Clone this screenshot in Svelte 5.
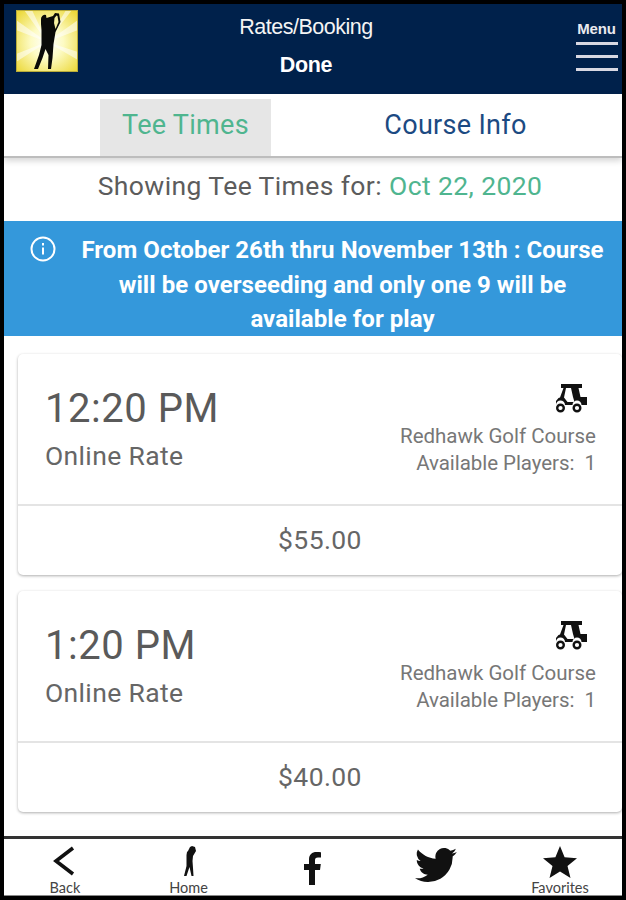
<script>
    const slots = [
        { time: "12:20 PM", rate: "Online Rate", course: "Redhawk Golf Course", players: 1, price: "$55.00" },
        { time: "1:20 PM", rate: "Online Rate", course: "Redhawk Golf Course", players: 1, price: "$40.00" },
    ];
</script>

<div class="frame">
    <header class="topbar">
        <div class="logo">
            <svg viewBox="0 0 62 62" width="62" height="62">
                <defs>
                    <radialGradient id="glow" cx="50%" cy="52%" r="66%">
                        <stop offset="0" stop-color="#ffffff" />
                        <stop offset="0.4" stop-color="#fdfbc4" />
                        <stop offset="1" stop-color="#ecd93c" />
                    </radialGradient>
                </defs>
                <rect width="62" height="62" fill="url(#glow)" />
                <g fill="#fff" opacity="0.55">
                    <path d="M31 32L0 10V20Z" />
                    <path d="M31 32L62 10V20Z" />
                    <path d="M31 32L0 44V52Z" />
                    <path d="M31 32L62 42V50Z" />
                    <path d="M31 32L8 0H16Z" />
                    <path d="M31 32L50 0H56Z" />
                </g>
                <path fill="#0a0a08" d="M25 9a4 4 0 0 1 5-4l.5 3L37 6l2-3 4 .5 1.500 8.500-5 10-2 12-1 14-1.500 11h-3l.5-14-3-6-3 9-4.500 11h-4l5-14 2.500-10V20l-.5-6z" />
                <path fill="#f6f0a0" d="M38.500 8l2-2.500 1 .5 1 6-3 7-1.500-6z" />
                <rect x="0.500" y="0.500" width="61" height="61" fill="none" stroke="#b9ac3a" />
            </svg>
        </div>
        <div class="heading">
            <div class="title">Rates/Booking</div>
            <div class="done">Done</div>
        </div>
        <div class="menu">
            <span class="menu-label">Menu</span>
            <i></i><i></i><i></i>
        </div>
    </header>

    <nav class="tabs">
        <div class="tab active">Tee Times</div>
        <div class="tab">Course Info</div>
    </nav>

    <div class="showing">Showing Tee Times for: <span class="date">Oct 22, 2020</span></div>

    <div class="notice">
        <svg class="info" viewBox="0 0 26 26" width="26" height="26" fill="none" stroke="#fff" stroke-width="2">
            <circle cx="13" cy="13" r="11.500" />
            <path d="M13 11.500v7" />
            <path d="M13 7v2.500" />
        </svg>
        <p>From October 26th thru November 13th : Course will be overseeding and only one 9 will be available for play</p>
    </div>

    <main class="list">
        {#each slots as slot}
            <section class="card">
                <div class="card-top">
                    <div class="left">
                        <div class="time">{slot.time}</div>
                        <div class="rate">{slot.rate}</div>
                    </div>
                    <div class="right">
                        <svg class="cart" viewBox="0 0 32 29" width="32" height="29">
                            <path fill="#111" d="M5 0h21v4h-3.500l2 9H31v8h-5.500a4.500 4.500 0 0 0-9 0H9a4.500 4.500 0 0 0-9 0v-4l2.500-3 1.500-.5L7.500 4H5zm5 4L8 13.500l3.500 4.500h7l-1.500-5-2-9z" />
                            <circle cx="4.500" cy="24" r="3.300" fill="none" stroke="#111" stroke-width="2.400" />
                            <circle cx="21" cy="24" r="3.300" fill="none" stroke="#111" stroke-width="2.400" />
                        </svg>
                        <div class="course">{slot.course}</div>
                        <div class="players">Available Players:&nbsp; {slot.players}</div>
                    </div>
                </div>
                <div class="price">{slot.price}</div>
            </section>
        {/each}
    </main>

    <footer class="bottombar">
        <div class="item">
            <div class="slot">
                <svg viewBox="0 0 28 30" width="28" height="30" fill="none" stroke="#111" stroke-width="3.600">
                    <path d="M22 2L5 15l17 13" />
                </svg>
            </div>
            <span>Back</span>
        </div>
        <div class="item">
            <div class="slot">
                <svg viewBox="0 0 16 30" width="16" height="30">
                    <path fill="#111" d="M7 5l2-4 2-1 3 1 1 4-3 5-.5 5 .5 7 .5 8h-2l-2-9-3 9H3l2.500-10V9L6 6z" />
                </svg>
            </div>
            <span>Home</span>
        </div>
        <div class="item">
            <div class="slot">
                <svg class="fb" viewBox="0 0 20 34" width="20" height="34">
                    <path fill="#111" d="M6 34V19H1v-6h5V8.500C6 3.500 9 1 13.500 1c2 0 3.800.2 4.500.3v5.200h-3c-2.400 0-3 1.100-3 2.800V13h5.800l-.8 6h-5v15z" />
                </svg>
            </div>
        </div>
        <div class="item">
            <div class="slot">
                <svg class="bird" viewBox="0 0 24 24" width="42" height="42">
                    <path fill="#111" d="M23.900 4.600c-.9.400-1.800.7-2.800.8 1-.6 1.800-1.600 2.200-2.700-1 .6-2 1-3.100 1.200a4.900 4.900 0 0 0-8.400 4.500C7.700 8.100 4.100 6.100 1.700 3.100a4.900 4.900 0 0 0 1.500 6.600c-.8 0-1.600-.2-2.200-.6v.1c0 2.400 1.700 4.400 3.900 4.800-.7.200-1.500.2-2.200.1.600 2 2.400 3.400 4.600 3.400A9.900 9.900 0 0 1 0 19.500 14 14 0 0 0 21.500 7.100c1-.7 1.800-1.500 2.400-2.500z" />
                </svg>
            </div>
        </div>
        <div class="item">
            <div class="slot">
                <svg viewBox="0 0 34 32" width="34" height="32">
                    <path fill="#111" d="M17 0l4.600 11.300 12.400.9-9.500 7.800 3 12-10.500-6.500L6.500 32l3-12L0 12.200l12.400-.9z" />
                </svg>
            </div>
            <span>Favorites</span>
        </div>
    </footer>
</div>

<style>
    :global(body) {
        background: #000;
    }
    .frame {
        width: 626px;
        height: 900px;
        box-sizing: border-box;
        border: 4px solid #000;
        background: #fff;
        display: flex;
        flex-direction: column;
        font-family: Roboto, sans-serif;
        overflow: hidden;
    }
    .topbar {
        height: 90px;
        flex: none;
        background: #00214b;
        display: flex;
        color: #fff;
        font-family: "Liberation Sans", sans-serif;
    }
    .logo {
        margin: 6px 0 0 12px;
        width: 62px;
        height: 62px;
        flex: none;
    }
    .logo svg {
        display: block;
    }
    .heading {
        flex: 1;
        text-align: center;
        padding: 10px 39px 0 0;
        box-sizing: border-box;
    }
    .title {
        font-size: 21.500px;
        line-height: 27px;
        letter-spacing: -0.5px;
        color: #f4f4f4;
    }
    .done {
        margin-top: 11px;
        font-size: 21.500px;
        line-height: 27px;
        font-weight: bold;
        letter-spacing: -0.3px;
    }
    .menu {
        width: 47px;
        flex: none;
        margin-right: 2px;
        padding-top: 16px;
        box-sizing: border-box;
        display: flex;
        flex-direction: column;
        align-items: stretch;
        gap: 10px;
    }
    .menu-label {
        font-size: 15px;
        line-height: 17px;
        font-weight: bold;
        text-align: center;
        margin-bottom: -5px;
        letter-spacing: -0.2px;
        color: #e9e9ee;
    }
    .menu i {
        height: 3px;
        background: #d8d8e2;
        margin-left: 3px;
        margin-right: 2px;
    }
    .tabs {
        height: 64px;
        flex: none;
        padding: 5px 0 0 96px;
        box-sizing: border-box;
        display: flex;
        border-bottom: 2px solid #bdbdbd;
        box-shadow: 0 3px 6px rgba(0, 0, 0, 0.16);
        position: relative;
    }
    .tab {
        flex: none;
        width: 171px;
        font-size: 27px;
        letter-spacing: 0.3px;
        color: #1c4a82;
        text-align: center;
        line-height: 52px;
        white-space: nowrap;
    }
    .tab.active {
        background: #e6e6e6;
        color: #4fb58f;
    }
    .tab:last-child {
        margin-left: 99px;
    }
    .showing {
        height: 63px;
        flex: none;
        padding-left: 14px;
        box-sizing: border-box;
        font-size: 26.500px;
        color: #5c5c5c;
        text-align: center;
        line-height: 55px;
        letter-spacing: 0.4px;
    }
    .date {
        color: #4fb58f;
    }
    .notice {
        height: 115px;
        flex: none;
        background: #3498db;
        display: flex;
        color: #fff;
        box-sizing: border-box;
        padding: 12px 18px 0 26px;
        gap: 25px;
    }
    .info {
        margin-top: 3px;
        flex: none;
    }
    .notice p {
        flex: 1;
        margin: 0;
        font-size: 24px;
        font-weight: 700;
        line-height: 34.500px;
        letter-spacing: 0.05px;
        text-align: center;
    }
    .list {
        flex: 1;
        padding: 18px 0 0 14px;
        box-sizing: border-box;
    }
    .card {
        height: 221px;
        margin-bottom: 16px;
        background: #fff;
        border-radius: 5px;
        box-shadow: 0 1px 3px rgba(0, 0, 0, 0.32);
        display: flex;
        flex-direction: column;
    }
    .card-top {
        height: 152px;
        flex: none;
        border-bottom: 2px solid #e4e4e4;
        display: flex;
        justify-content: space-between;
        box-sizing: border-box;
        padding: 0 26px 0 27px;
    }
    .time {
        margin-top: 31px;
        font-size: 40px;
        line-height: 48px;
        letter-spacing: 0.55px;
        color: #5a5a5a;
    }
    .rate {
        margin-top: 6px;
        font-size: 26.500px;
        line-height: 33px;
        letter-spacing: 0.35px;
        color: #666;
    }
    .right {
        text-align: right;
        font-size: 20.500px;
        color: #777;
        line-height: 27px;
        padding-top: 30px;
    }
    .cart {
        display: block;
        margin: 0 8px 10px auto;
    }
    .players {
        letter-spacing: -0.05px;
    }
    .price {
        flex: 1;
        display: flex;
        align-items: center;
        justify-content: center;
        padding-bottom: 3px;
        font-size: 26.500px;
        letter-spacing: 0.4px;
        color: #666;
    }
    .bottombar {
        height: 60px;
        flex: none;
        border-top: 3px solid #333;
        border-bottom: 1px solid #888;
        box-sizing: border-box;
        display: grid;
        grid-template-columns: 122px 125px 123px 124px 1fr;
        background: #fff;
    }
    .item {
        display: flex;
        flex-direction: column;
        align-items: center;
        padding-top: 7px;
        color: #444;
        font-family: Lato, sans-serif;
        font-size: 14.500px;
        line-height: 15px;
        height: 56px;
        box-sizing: border-box;
    }
    .slot {
        height: 34px;
        flex: none;
        display: flex;
        justify-content: center;
        align-items: flex-start;
    }
    .slot svg {
        display: block;
        flex: none;
    }
    .fb {
        margin-top: 5px;
    }
    .bird {
        margin-top: -2px;
    }
</style>
